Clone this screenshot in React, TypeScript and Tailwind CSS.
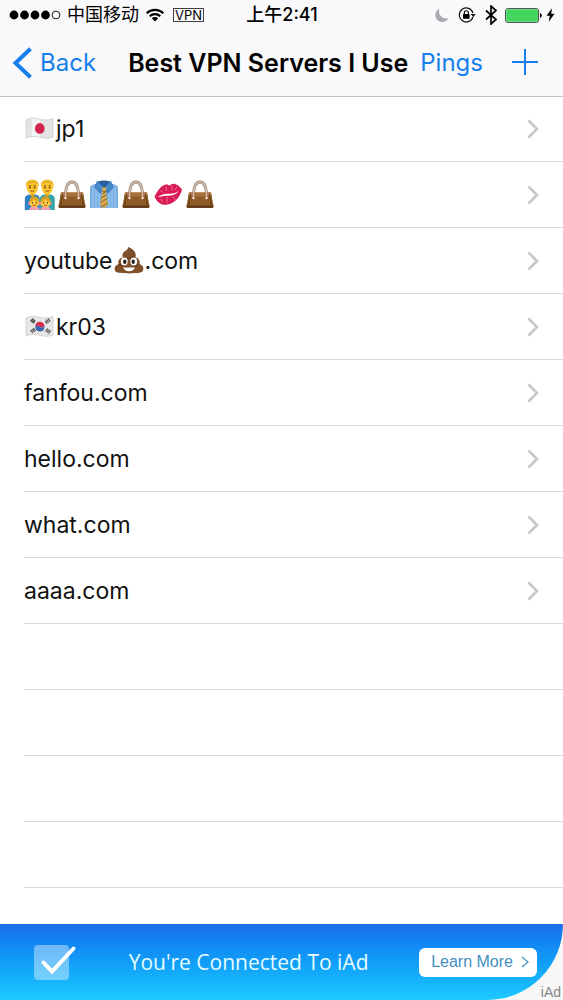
import type { ReactNode } from "react";

const FONT = "font-['Inter','Noto_Sans_CJK_SC',sans-serif]";

function Emoji({ label, children }: { label: string; children: ReactNode }) {
  return (
    <svg role="img" aria-label={label} viewBox="0 0 32 32" className="size-8 shrink-0">
      {children}
    </svg>
  );
}

const FLAG_PATH = "M2 7C7 4.500 11 5 15.500 6.200S24 7.300 29 5.500V24C24 26 20 25.300 15.500 24.200S7 23 2 25Z";

function JapanFlag() {
  return (
    <Emoji label="Japan">
      <path d={FLAG_PATH} fill="#e4e4e4" stroke="#cdcdcd" strokeWidth=".8" />
      <path d="M8 6q4-1 8 1v17q-4-1.500-8-1z" fill="#fff" opacity=".5" />
      <ellipse cx="15.800" cy="15.400" rx="4.800" ry="5.300" fill="#d0214f" />
    </Emoji>
  );
}

function KoreaFlag() {
  return (
    <Emoji label="South Korea">
      <path d={FLAG_PATH} fill="#e6e6e6" stroke="#cdcdcd" strokeWidth=".8" />
      <path d="M11.200 15.500a4.700 4.900 0 0 1 9.200-1.200c-1 3-3.600 2.500-4.600 1.500s-3.200-1.600-4.600-.3z" fill="#d72b4b" />
      <path d="M11.200 15.500c1.400-1.300 3.600-.7 4.600.3s3.600 1.500 4.600-1.500a4.700 4.900 0 1 1-9.200 1.200z" fill="#3468b0" />
      <g stroke="#444" strokeWidth="1.200" fill="none">
        <path d="M6.500 10.500l2.600-3M7.800 11.500l2.600-3M9.200 12.300l2.200-2.800" />
        <path d="M22.500 8.500l2.200 3M24 7.500l2.200 3M21.300 9.800l2 2.800" />
        <path d="M6.500 19l2.400 3M7.900 18l2.400 3M9.300 17.200l2.200 2.800" />
        <path d="M21.500 20.500l2.300-3M22.900 21.500l2.300-3M24.300 22.500l2.300-3" />
      </g>
    </Emoji>
  );
}

function Parent({ x, shirt }: { x: number; shirt: string }) {
  return (
    <g transform={`translate(${x} 0)`}>
      <path d="M-7.500 31V20q0-3.500 4-4.500h7q4 1 4 4.500v11z" fill={shirt} />
      <path d="M-2 13h4v4q-2 1.500-4 0z" fill="#e8a51d" />
      <ellipse cy="8.500" rx="5.700" ry="6.600" fill="#fcc62d" />
      <path d="M-6 8.500C-7.500 3-4 .8 0 .8S7.500 3 6 8.500L5 5.200Q0 3-5 5.200z" fill="#e9b52c" />
      <path d="M-3.600 6.800q1.300-1 2.500 0M1.100 6.800q1.200-1 2.500 0" stroke="#8a5710" strokeWidth=".8" fill="none" />
      <circle cx="-2.300" cy="8.400" r=".9" fill="#493018" />
      <circle cx="2.300" cy="8.400" r=".9" fill="#493018" />
      <path d="M-2 11.700q2 1.400 4 0" stroke="#a64c20" strokeWidth="1" fill="none" />
    </g>
  );
}

function Child({ x }: { x: number }) {
  return (
    <g transform={`translate(${x} 0)`}>
      <path d="M-5 31q0-3 3-3.500h4q3 .5 3 3.500z" fill="#f59cb0" />
      <circle cx="-4.800" cy="24.500" r="1.500" fill="#f08a83" />
      <circle cx="4.800" cy="24.500" r="1.500" fill="#f08a83" />
      <ellipse cy="23.500" rx="4.700" ry="5" fill="#ffcf42" />
      <path d="M-5 23q0-5.500 5-5.500T5 23q-3-.3-5-2.800Q-2 22.700-5 23z" fill="#d99f22" />
      <circle cx="-1.900" cy="23.800" r=".8" fill="#4c3018" />
      <circle cx="1.900" cy="23.800" r=".8" fill="#4c3018" />
      <path d="M-1.700 26q1.700 1.300 3.400 0" stroke="#c03b26" strokeWidth="1" fill="none" />
    </g>
  );
}

function Family() {
  return (
    <Emoji label="Family">
      <Parent x={8.3} shirt="#2f82c8" />
      <Parent x={23.3} shirt="#35a6a5" />
      <Child x={10.3} />
      <Child x={21.5} />
    </Emoji>
  );
}

function Handbag() {
  return (
    <Emoji label="Handbag">
      <path d="M9.500 18C9.500 8 11.500 3 16 3s6.500 5 6.500 15" fill="none" stroke="#8d7767" strokeWidth="2.800" />
      <path d="M9.500 18C9.500 8 11.500 3 16 3s6.500 5 6.500 15" fill="none" stroke="#d8c8ba" strokeWidth="1.500" />
      <path d="M5 13.500h22L29.500 27q0 1.800-1.800 1.800H4.300q-1.800 0-1.800-1.800z" fill="#8f5b26" />
      <path d="M5 13.500h22l.7 4H4.300z" fill="#a8713a" />
      <path d="M6.500 15.500 4.500 27M25.500 15.500l2 11.500" stroke="#5f3b17" strokeWidth="1" fill="none" />
      <path d="M2.700 26.500h26.600l.2 1q0 1.500-1.800 1.500H4.300q-1.800 0-1.800-1.500z" fill="#613d1c" />
      <path d="M9.500 13v5M22.500 13v5" stroke="#cdb8a2" strokeWidth="1.500" />
      <circle cx="9.500" cy="19" r="1.300" fill="#f2dfc4" />
      <circle cx="22.500" cy="19" r="1.300" fill="#f2dfc4" />
    </Emoji>
  );
}

function Necktie() {
  return (
    <Emoji label="Necktie">
      <path d="M9 4 3.500 6.500Q2 7.300 2 9v20h28V9q0-1.700-1.500-2.500L23 4z" fill="#79aee3" />
      <path d="M5 8v21M8 7v22M11 9v20M21 9v20M24 7v22M27 8v21" stroke="#a3ccf2" strokeWidth="1" />
      <path d="M10 2.500q6-2 12 0L16 10z" fill="#275c94" />
      <path d="M9.500 2 7 8.500l5 5.500 4-5.500zM22.500 2 25 8.500 20 14l-4-5.500z" fill="#4789cb" stroke="#2865a2" strokeWidth=".7" />
      <path d="M13.500 8.500h5l-1 4 2.500 13.500-4 3.500-4-3.500 2.500-13.500z" fill="#d7ab4e" />
      <path d="m13.500 15 5-2.500M12.800 19l6.300-3.500M12.300 23.500l7.200-4M13 28l7-4" stroke="#8c682d" strokeWidth="1" />
      <path d="M14.500 12.500h3" stroke="#8c682d" />
    </Emoji>
  );
}

function Kiss() {
  return (
    <Emoji label="Kiss mark">
      <path d="M2.500 18C5 12 9 6.500 14 5.500c2-.4 2.600.5 3.500 1.200 2-1.700 4-2.400 6-1.500C27 6.500 28.500 8.500 30 10.500 28 19 22 25 14 25.800 8 26 5 22.500 2.500 18z" fill="#db1b55" />
      <path d="M5.500 18.200q4.500-3.800 11.500-3.500 6 .3 10-3-3.500 4.600-9 4.900-6 .3-12.500 1.600z" fill="#fff" />
      <path d="M9 11.500l2 2M14 7.500l.5 4M20 7v4M25 8l-2 2.500M9 20l1.500 3M15 18.500v5M21 17.500l2 3" stroke="#f1759a" strokeWidth=".9" strokeLinecap="round" />
    </Emoji>
  );
}

function Poop() {
  return (
    <Emoji label="Pile of poo">
      <path d="M15 2c.5 3-3 3.500-4.500 5.500-1.600 2-1.200 4-.5 5-3.500.5-5.500 3-4.500 6.500C1.500 20.500.8 24 2.500 26.500 4 29 28 29 29.500 26.500c1.700-2.500 1-6-3-7.500 1-3.500-1-6-4-6.500C24 6.500 19 3.500 15 2z" fill="#80502b" />
      <path d="M10.500 12.800q6 2 11-1.300M6 19.500q3 2 6 1.500M20 21q4 .5 6.500-2" stroke="#5f3718" strokeWidth="1" fill="none" />
      <ellipse cx="11.300" cy="16.500" rx="3.400" ry="3.900" fill="#fff" />
      <ellipse cx="20.700" cy="16.500" rx="3.400" ry="3.900" fill="#fff" />
      <ellipse cx="11.800" cy="16.700" rx="1.700" ry="2.200" fill="#2c211c" />
      <ellipse cx="20.200" cy="16.700" rx="1.700" ry="2.200" fill="#2c211c" />
      <path d="M10 22.500h12q-1.500 3.700-6 3.700t-6-3.700z" fill="#fff" />
    </Emoji>
  );
}

const SERVERS: { id: string; name: ReactNode }[] = [
  { id: "jp1", name: <><JapanFlag />jp1</> },
  { id: "emoji", name: <><Family /><Handbag /><Necktie /><Handbag /><Kiss /><Handbag /></> },
  { id: "youtube", name: <>youtube<Poop />.com</> },
  { id: "kr03", name: <><KoreaFlag />kr03</> },
  { id: "fanfou", name: "fanfou.com" },
  { id: "hello", name: "hello.com" },
  { id: "what", name: "what.com" },
  { id: "aaaa", name: "aaaa.com" },
];

const EMPTY_ROWS = 4;

function StatusBar() {
  return (
    <div className="grid h-[30px] grid-cols-[1fr_auto_1fr] items-center pl-[9px] pr-2 text-black">
      <div className="flex items-center gap-[6px]">
        <svg viewBox="0 0 52 10" className="h-[10px] w-[52px]" aria-hidden="true">
          <circle cx="5" cy="5" r="4.400" />
          <circle cx="15.500" cy="5" r="4.400" />
          <circle cx="26" cy="5" r="4.400" />
          <circle cx="36.500" cy="5" r="4.400" />
          <circle cx="47" cy="5" r="3.900" fill="none" stroke="#000" strokeWidth=".9" />
        </svg>
        <span className="text-[18px] leading-5">中国移动</span>
        <svg viewBox="0 0 20 14" className="h-[14px] w-5" aria-hidden="true">
          <path d="M1.700 5.200a12 12 0 0 1 16.600 0M4.700 8.300a7.700 7.700 0 0 1 10.600 0" fill="none" stroke="#000" strokeWidth="2.200" />
          <path d="M10 13.500 6.800 10.300a4.600 4.600 0 0 1 6.400 0z" />
        </svg>
        <span className="ml-[2px] border border-neutral-700 px-px text-[13px] leading-3">VPN</span>
      </div>
      <time className="text-[18px] font-medium leading-5">上午2:41</time>
      <div className="flex items-center justify-end">
        <svg viewBox="0 0 14 14" className="size-[14px]" aria-hidden="true">
          <path d="M4.500.8A6.900 6.900 0 1 0 13.500 10 7 7 0 0 1 4.500.8z" fill="#aaa9ad" />
        </svg>
        <svg viewBox="0 0 18 16" className="ml-[9px] h-4 w-[18px]" aria-hidden="true">
          <path d="M14.900 10.300a7 7 0 1 1 .1-4.300" fill="none" stroke="#111" strokeWidth="1.200" />
          <path d="M12.700 7h5l-2.500 3.300z" fill="#111" />
          <rect x="5" y="7" width="6.600" height="4.800" rx=".6" />
          <path d="M6.300 7.200V5.700a2 2 0 0 1 4 0v1.500" fill="none" stroke="#000" strokeWidth="1.100" />
        </svg>
        <svg viewBox="0 0 12 20" className="ml-[9px] h-5 w-3" aria-hidden="true">
          <path d="m1 5.500 10 9-5 4.500V1l5 4.500-10 9" fill="none" stroke="#000" strokeWidth="1.700" />
        </svg>
        <svg viewBox="0 0 37 15" className="ml-2 h-[15px] w-[37px]" aria-hidden="true">
          <rect x=".6" y=".6" width="33" height="13.800" rx="2" fill="#fff" stroke="#444" strokeWidth="1" />
          <rect x="1.200" y="1.200" width="31.800" height="12.600" rx="1.200" fill="#43d65e" />
          <path d="M35 5q1.800.6 1.800 2.500T35 10z" />
        </svg>
        <svg viewBox="0 0 9 14" className="ml-1 h-[14px] w-[9px]" aria-hidden="true">
          <path d="M6 .3.500 7.800h3.300L2.700 13.700 8.600 5.800H5.200z" />
        </svg>
      </div>
    </div>
  );
}

function NavBar() {
  return (
    <nav className="flex h-[66px] items-center pl-3 pr-6 text-[#1580ec]">
      <button type="button" className="flex items-center gap-2 text-[24px] leading-8">
        <svg viewBox="0 0 20 32" className="h-8 w-5" aria-hidden="true">
          <path d="M18.500 1.800 3.500 16l15 14.200" fill="none" stroke="currentColor" strokeWidth="4" />
        </svg>
        Back
      </button>
      <h1 className="flex-1 whitespace-nowrap text-right text-[25px] font-semibold leading-8 text-black">
        Best VPN Servers I Use
      </h1>
      <button type="button" className="ml-3 text-[24px] leading-8">Pings</button>
      <button type="button" aria-label="Add server" className="ml-7">
        <svg viewBox="0 0 28 28" className="size-7" aria-hidden="true">
          <path d="M14 0v26M1 13h26" stroke="currentColor" strokeWidth="2" />
        </svg>
      </button>
    </nav>
  );
}

function AdBanner() {
  return (
    <aside className="relative h-19 bg-[#f7f7f7]">
      <div className="flex h-full items-center rounded-br-[76px] bg-linear-to-b from-[#196eed] to-[#1fcaff] pl-8 pr-[26px]">
        <svg viewBox="0 0 46 40" className="h-10 w-[46px] shrink-0" aria-hidden="true">
          <rect x="2" y="3" width="35" height="35" rx="4" fill="#fff" fillOpacity=".4" />
          <path d="m11.500 20.500 8.500 9L41.500 6.500" fill="none" stroke="#fff" strokeWidth="4" strokeLinecap="round" />
        </svg>
        <p className="flex-1 whitespace-nowrap text-center font-['Open_Sans',sans-serif] text-[21px] leading-8 text-[#e4fbff]">
          You're Connected To iAd
        </p>
        <button
          type="button"
          className="flex h-[29px] items-center gap-2 rounded-md bg-white pl-3 pr-2 font-['Liberation_Sans',sans-serif] text-[16px] text-[#3f8fc0]"
        >
          Learn More
          <svg viewBox="0 0 8 12" className="h-3 w-2" aria-hidden="true">
            <path d="m1 1 6 5-6 5" fill="none" stroke="currentColor" strokeWidth="1.200" />
          </svg>
        </button>
      </div>
      <span className="absolute bottom-0 right-[2px] font-['Liberation_Sans',sans-serif] text-[14px] leading-4 text-[#858585]">
        iAd
      </span>
    </aside>
  );
}

export default function App() {
  return (
    <div className={`flex min-h-screen flex-col bg-white ${FONT}`}>
      <header className="relative bg-[#f9f8fb] shadow-[0_1px_0_#c4c3c6]">
        <StatusBar />
        <NavBar />
      </header>
      <main className="flex-1">
        <ul className="pl-6">
          {SERVERS.map((server) => (
            <li key={server.id} className="border-b border-[#dad9dc]">
              <a
                href={`#${server.id}`}
                className="flex h-[65px] items-center justify-between pr-6 text-[23px] leading-8 text-[#111]"
              >
                <span className="flex items-center">{server.name}</span>
                <svg viewBox="0 0 12 20" className="h-5 w-3" aria-hidden="true">
                  <path d="m1.500 1.500 8.500 8.500-8.500 8.500" fill="none" stroke="#c5c5ca" strokeWidth="2.600" />
                </svg>
              </a>
            </li>
          ))}
          {Array.from({ length: EMPTY_ROWS }, (_, i) => (
            <li key={i} aria-hidden="true" className="h-[66px] border-b border-[#dad9dc]" />
          ))}
        </ul>
      </main>
      <AdBanner />
    </div>
  );
}
